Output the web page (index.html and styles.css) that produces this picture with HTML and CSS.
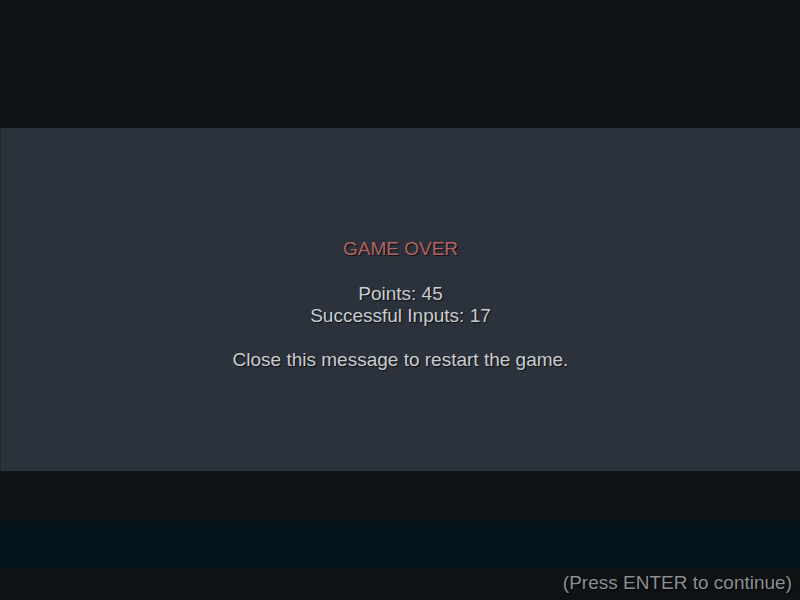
FILE: index.html
```html
<!DOCTYPE html>
<html lang="en">
	<head>
		<meta charset="UTF-8" />
		<meta name="viewport" content="width=device-width, initial-scale=1.0" />
		<title>Game Over</title>
		<link rel="stylesheet" href="styles.css">
	</head>
	<body>
		<div class="screen">
			<div class="top-band"></div>

			<div class="dialog">
				<p class="title">GAME OVER</p>
				<p class="stats">
					Points: 45<br />
					Successful Inputs: 17
				</p>
				<p class="hint">Close this message to restart the game.</p>
			</div>

			<div class="gap-band"></div>
			<div class="input-band"></div>

			<div class="footer">
				<span class="continue">(Press ENTER to continue)</span>
			</div>
		</div>
	</body>
</html>
```

FILE: styles.css
```css
body {
	margin: 0;
	padding: 0;
	background-color: #0e1215;
	font-family: "Liberation Sans", Arial, sans-serif;
}

.screen {
	width: 800px;
	height: 600px;
	display: flex;
	flex-direction: column;
}

.top-band {
	height: 128px;
	background-color: #0f1317;
}

.dialog {
	height: 343px;
	box-sizing: border-box;
	padding-top: 10px;
	background-color: #2c323b;
	border-left: 1px solid #23282f;
	display: flex;
	flex-direction: column;
	align-items: center;
	justify-content: center;
	color: #c9cdd2;
	font-size: 19px;
	line-height: 22px;
	text-shadow: 1px 1px 1px #0c0e11;
	text-align: center;
}

.dialog p {
	margin: 0;
}

.title {
	color: #b26365;
}

.stats {
	padding-top: 23px;
}

.hint {
	padding-top: 22px;
}

.gap-band {
	height: 50px;
	background-color: #111417;
}

.input-band {
	height: 48px;
	background-color: #03141a;
}

.footer {
	flex: 1;
	display: flex;
	justify-content: flex-end;
	align-items: center;
	padding-right: 8px;
	padding-bottom: 4px;
	background-color: #0e1215;
}

.continue {
	color: #8b8f94;
	font-size: 19px;
	text-shadow: 1px 1px 1px #000;
}
```
